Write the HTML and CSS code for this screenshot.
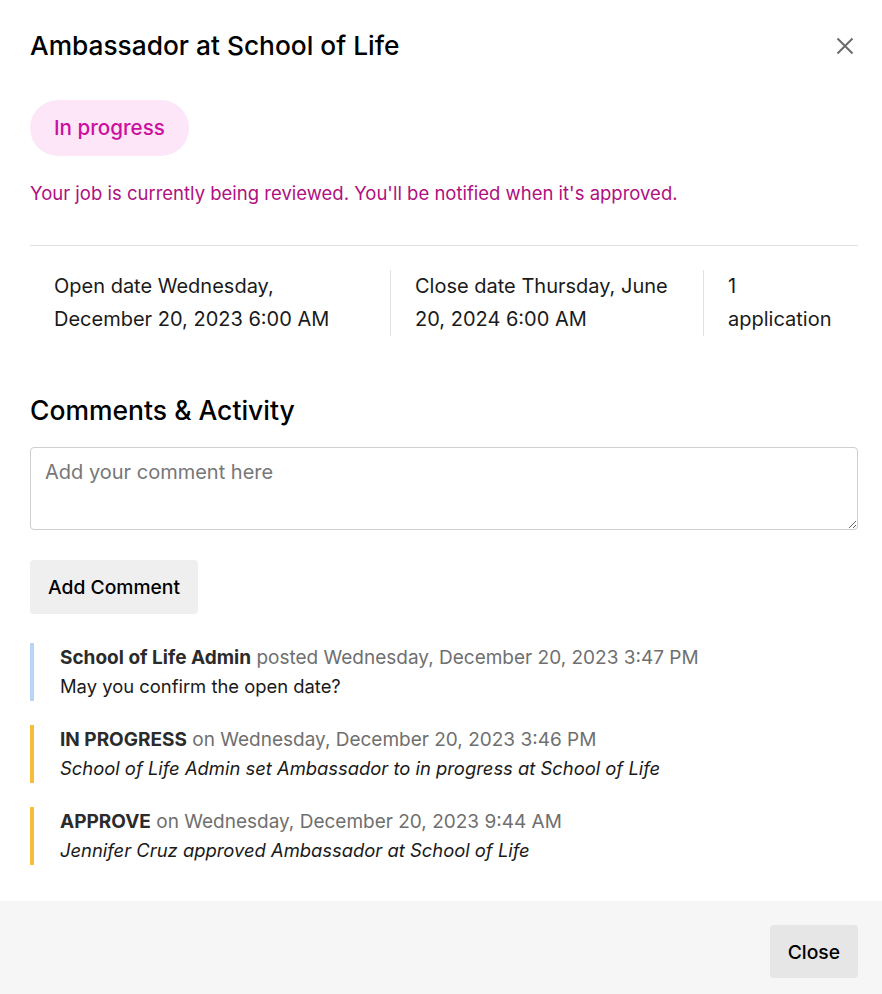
FILE: index.html
```html
<!DOCTYPE html>
<html lang="en">
<head>
  <meta charset="UTF-8">
  <meta name="viewport" content="width=device-width, initial-scale=1.0">
  <title>Ambassador at School of Life</title>
  <link rel="stylesheet" href="styles.css">
</head>
<body>

<section class="job-modal">
  <div class="modal-body">
    <header class="modal-header">
      <h1 class="modal-title">Ambassador at School of Life</h1>
      <button class="close-icon" aria-label="Close">
        <svg width="18" height="18" viewBox="0 0 18 18" aria-hidden="true">
          <path d="M1.5 1.5 L16.5 16.5 M16.5 1.5 L1.5 16.5" stroke="#6b6b6b" stroke-width="2" fill="none"/>
        </svg>
      </button>
    </header>

    <span class="status-pill">In progress</span>
    <p class="status-note">Your job is currently being reviewed. You'll be notified when it's approved.</p>

    <div class="job-stats">
      <div class="stat">Open date Wednesday, December 20, 2023 6:00 AM</div>
      <div class="stat">Close date Thursday, June 20, 2024 6:00 AM</div>
      <div class="stat">1 application</div>
    </div>

    <h2 class="section-title">Comments &amp; Activity</h2>
    <textarea class="comment-box" placeholder="Add your comment here"></textarea>
    <button class="btn add-btn">Add Comment</button>

    <ul class="activity-list">
      <li class="activity comment">
        <div class="activity-head"><strong>School of Life Admin</strong> posted Wednesday, December 20, 2023 3:47 PM</div>
        <div class="activity-text">May you confirm the open date?</div>
      </li>
      <li class="activity event">
        <div class="activity-head"><strong>IN PROGRESS</strong> on Wednesday, December 20, 2023 3:46 PM</div>
        <div class="activity-text"><em>School of Life Admin set Ambassador to in progress at School of Life</em></div>
      </li>
      <li class="activity event">
        <div class="activity-head"><strong>APPROVE</strong> on Wednesday, December 20, 2023 9:44 AM</div>
        <div class="activity-text"><em>Jennifer Cruz approved Ambassador at School of Life</em></div>
      </li>
    </ul>
  </div>

  <footer class="modal-footer">
    <button class="btn close-btn">Close</button>
  </footer>
</section>

</body>
</html>
```

FILE: styles.css
```css
* {
  box-sizing: border-box;
}

body {
  margin: 0;
  background-color: #fff;
  font-family: Inter, "Liberation Sans", sans-serif;
  color: #000;
}

.modal-body {
  padding: 22px 24px 36px 30px;
}

.modal-header {
  display: flex;
  justify-content: space-between;
  align-items: center;
}

.modal-title {
  margin: 0;
  font-size: 26.3px;
  font-weight: 500;
  line-height: 48px;
}

.close-icon {
  background: none;
  border: 0;
  padding: 0;
  margin-right: 4px;
  cursor: pointer;
  display: flex;
}

.status-pill {
  display: inline-block;
  margin-top: 30px;
  padding: 0 24px;
  height: 56px;
  line-height: 56px;
  border-radius: 28px;
  background-color: #fde6f8;
  color: #cc0f9e;
  font-size: 20.6px;
  font-weight: 500;
}

.status-note {
  margin: 25px 0 0;
  color: #b0107f;
  font-size: 18.5px;
  line-height: 24px;
  padding-bottom: 40px;
  border-bottom: 1px solid #e2e2e2;
}

.job-stats {
  display: grid;
  grid-template-columns: 360px 313px 1fr;
  margin-top: 24px;
}

.stat {
  padding: 0 24px;
  font-size: 20px;
  line-height: 33px;
  color: #1a1a1a;
  border-left: 1px solid #e2e2e2;
}

.stat:first-child {
  border-left: 0;
}

.section-title {
  margin: 54px 0 0;
  font-size: 26.5px;
  font-weight: 500;
  line-height: 40px;
}

.comment-box {
  display: block;
  width: 100%;
  height: 83px;
  margin-top: 17px;
  padding: 12px 14px;
  border: 1px solid #cfcfcf;
  border-radius: 4px;
  font-family: inherit;
  font-size: 20px;
  resize: vertical;
}

.comment-box::placeholder {
  color: #777;
}

.btn {
  border: 0;
  border-radius: 4px;
  font-family: inherit;
  font-size: 19.3px;
  font-weight: 500;
  color: #000;
  cursor: pointer;
}

.add-btn {
  margin-top: 30px;
  height: 54px;
  padding: 0 18px;
  background-color: #efefef;
}

.activity-list {
  list-style: none;
  margin: 29px 0 0;
  padding: 0;
}

.activity {
  border-left: 4px solid #f4bd3c;
  padding: 0 0 0 26px;
  margin-bottom: 24px;
  font-size: 19px;
  line-height: 29px;
}

.activity:last-child {
  margin-bottom: 0;
}

.activity.comment {
  border-left-color: #b9d4f6;
}

.activity-head {
  color: #6f6f6f;
}

.activity-head strong {
  color: #2b2b2b;
  font-weight: 700;
}

.activity-text {
  color: #1a1a1a;
  font-size: 18.4px;
}

.modal-footer {
  display: flex;
  justify-content: flex-end;
  background-color: #f6f6f6;
  padding: 24px 24px 16px;
}

.close-btn {
  height: 53px;
  padding: 0 18px;
  background-color: #e6e6e6;
}
```
